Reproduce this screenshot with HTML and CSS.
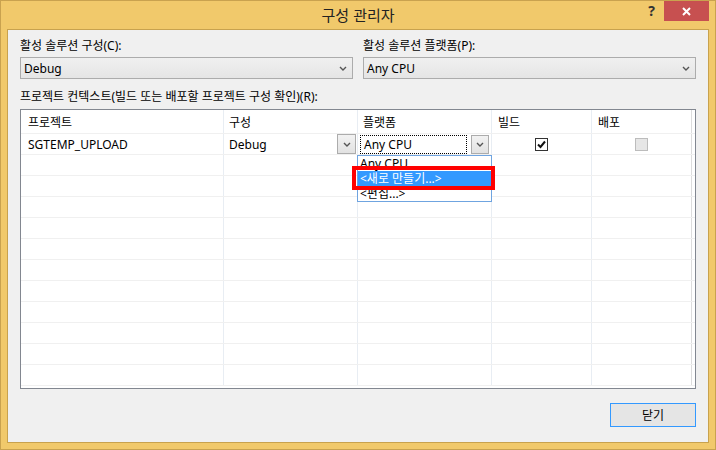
FILE: index.html
```html
<!DOCTYPE html>
<html lang="ko">
<head>
    <meta charset="UTF-8">
    <title>구성 관리자</title>
    <link rel="stylesheet" href="styles.css">
</head>
<body>
    <div class="window">
        <div class="titlebar">
            <span class="title">구성 관리자</span>
            <div class="title-buttons">
                <span class="help">?</span>
                <span class="close">
                    <svg width="9" height="9" viewBox="0 0 9 9"><path d="M1 1 L8 8 M8 1 L1 8" stroke="#fff" stroke-width="2" fill="none"/></svg>
                </span>
            </div>
        </div>
        <div class="client">
            <div class="top-row">
                <div class="field">
                    <div class="field-label">활성 솔루션 구성(C):</div>
                    <div class="combo">
                        <span>Debug</span>
                        <svg class="chev" width="8" height="5" viewBox="0 0 8 5"><path d="M1 1 L4 4 L7 1" stroke="#555" stroke-width="1.4" fill="none"/></svg>
                    </div>
                </div>
                <div class="field">
                    <div class="field-label">활성 솔루션 플랫폼(P):</div>
                    <div class="combo">
                        <span>Any CPU</span>
                        <svg class="chev" width="8" height="5" viewBox="0 0 8 5"><path d="M1 1 L4 4 L7 1" stroke="#555" stroke-width="1.4" fill="none"/></svg>
                    </div>
                </div>
            </div>
            <div class="grid-label">프로젝트 컨텍스트(빌드 또는 배포할 프로젝트 구성 확인)(R):</div>
            <div class="grid">
                <div class="row head">
                    <div class="cell c1">프로젝트</div>
                    <div class="cell c2">구성</div>
                    <div class="cell c3">플랫폼</div>
                    <div class="cell c4">빌드</div>
                    <div class="cell c5">배포</div>
                </div>
                <div class="row">
                    <div class="cell c1">SGTEMP_UPLOAD</div>
                    <div class="cell c2">
                        <span class="cell-text">Debug</span>
                        <span class="drop-btn"><svg width="8" height="5" viewBox="0 0 8 5"><path d="M1 1 L4 4 L7 1" stroke="#555" stroke-width="1.4" fill="none"/></svg></span>
                    </div>
                    <div class="cell c3 editing">
                        <span class="focus-box">Any CPU</span>
                        <span class="drop-btn"><svg width="8" height="5" viewBox="0 0 8 5"><path d="M1 1 L4 4 L7 1" stroke="#555" stroke-width="1.4" fill="none"/></svg></span>
                    </div>
                    <div class="cell c4 center">
                        <span class="check">
                            <svg width="11" height="11" viewBox="0 0 11 11"><path d="M2 5.5 L4.5 8 L9 2.5" stroke="#111" stroke-width="2" fill="none"/></svg>
                        </span>
                    </div>
                    <div class="cell c5 center">
                        <span class="check disabled"></span>
                    </div>
                </div>
                <div class="row"><div class="cell c1"></div><div class="cell c2"></div><div class="cell c3"></div><div class="cell c4"></div><div class="cell c5"></div></div>
                <div class="row"><div class="cell c1"></div><div class="cell c2"></div><div class="cell c3"></div><div class="cell c4"></div><div class="cell c5"></div></div>
                <div class="row"><div class="cell c1"></div><div class="cell c2"></div><div class="cell c3"></div><div class="cell c4"></div><div class="cell c5"></div></div>
                <div class="row"><div class="cell c1"></div><div class="cell c2"></div><div class="cell c3"></div><div class="cell c4"></div><div class="cell c5"></div></div>
                <div class="row"><div class="cell c1"></div><div class="cell c2"></div><div class="cell c3"></div><div class="cell c4"></div><div class="cell c5"></div></div>
                <div class="row"><div class="cell c1"></div><div class="cell c2"></div><div class="cell c3"></div><div class="cell c4"></div><div class="cell c5"></div></div>
                <div class="row"><div class="cell c1"></div><div class="cell c2"></div><div class="cell c3"></div><div class="cell c4"></div><div class="cell c5"></div></div>
                <div class="row"><div class="cell c1"></div><div class="cell c2"></div><div class="cell c3"></div><div class="cell c4"></div><div class="cell c5"></div></div>
                <div class="row"><div class="cell c1"></div><div class="cell c2"></div><div class="cell c3"></div><div class="cell c4"></div><div class="cell c5"></div></div>
                <div class="row"><div class="cell c1"></div><div class="cell c2"></div><div class="cell c3"></div><div class="cell c4"></div><div class="cell c5"></div></div>
                <div class="row"><div class="cell c1"></div><div class="cell c2"></div><div class="cell c3"></div><div class="cell c4"></div><div class="cell c5"></div></div>

                <div class="drop-list">
                    <div class="drop-item">Any CPU</div>
                    <div class="drop-item selected">&lt;새로 만들기...&gt;</div>
                    <div class="drop-item">&lt;편집...&gt;</div>
                </div>
                <div class="highlight"></div>
            </div>
            <div class="footer">
                <button type="button" class="close-btn">닫기</button>
            </div>
        </div>
    </div>
</body>
</html>
```

FILE: styles.css
```css
* {
    box-sizing: border-box;
}
body {
    margin: 0;
    font-family: "Segoe UI", "Noto Sans", "Noto Sans CJK KR", sans-serif;
    font-size: 12px;
    color: #000;
}
.window {
    width: 716px;
    height: 450px;
    background: #f1c96b;
    border: 1px solid #c9a24f;
    display: flex;
    flex-direction: column;
}
.titlebar {
    height: 28px;
    display: grid;
    grid-template-columns: 1fr auto 1fr;
    align-items: start;
}
.title {
    grid-column: 2;
    font-family: "Noto Sans CJK KR", sans-serif;
    font-size: 15px;
    line-height: 28px;
    color: #222;
}
.title-buttons {
    grid-column: 3;
    display: flex;
    justify-content: flex-end;
    align-items: flex-start;
}
.help {
    font-family: "Noto Sans", sans-serif;
    font-weight: bold;
    font-size: 14px;
    line-height: 18px;
    margin-top: 1px;
    margin-right: 9px;
    color: #333;
}
.close {
    width: 45px;
    height: 20px;
    background: #c75050;
    display: flex;
    align-items: center;
    justify-content: center;
    margin-right: 6px;
}
.client {
    margin: 0 6px;
    height: 414px;
    border: 1px solid #c8a24e;
    background: #f0f0f0;
    padding: 8px 12px 0;
}
.top-row {
    display: flex;
    gap: 10px;
}
.field {
    flex: 1;
}
.field-label {
    line-height: 16px;
    margin-bottom: 3px;
}
.combo {
    height: 22px;
    border: 1px solid #acacac;
    background: linear-gradient(#f0f0f0, #e5e5e5);
    display: flex;
    align-items: center;
    justify-content: space-between;
    padding: 0 5px 0 3px;
}
.grid-label {
    line-height: 16px;
    margin-top: 10px;
    margin-bottom: 4px;
}
.grid {
    position: relative;
    height: 280px;
    border: 1px solid #828790;
    background: #fff;
    overflow: hidden;
}
.row {
    display: flex;
    height: 21px;
    border-bottom: 1px solid #f0f0f0;
}
.row.head {
    height: 24px;
}
.cell {
    display: flex;
    align-items: center;
    border-right: 1px solid #e8edf3;
    padding-left: 6px;
}
.c1 { width: 203px; padding-left: 7px; }
.c2 { width: 134px; padding-left: 5px; }
.c3 { width: 134px; padding-left: 5px; }
.c4 { width: 100px; }
.c5 { width: 100px; border-right-color: #dcdcdc; }
.cell.center {
    justify-content: center;
    padding-left: 0;
}
.cell-text {
    flex: 1;
}
.drop-btn {
    width: 19px;
    height: 20px;
    border: 1px solid #acacac;
    background: linear-gradient(#f2f2f2, #e2e2e2);
    display: flex;
    align-items: center;
    justify-content: center;
    margin-right: 1px;
}
.cell.editing {
    padding: 1px 1px 0 2px;
    align-items: stretch;
}
.focus-box {
    flex: 1;
    border: 1px dotted #000;
    padding-left: 3px;
    display: flex;
    align-items: center;
    margin-right: 4px;
}
.editing .drop-btn {
    width: 18px;
    height: 19px;
}
.check {
    width: 13px;
    height: 13px;
    border: 1px solid #333;
    background: #fff;
    display: flex;
    align-items: center;
    justify-content: center;
    margin-left: -1px;
}
.check.disabled {
    border-color: #bcbcbc;
    background: #e6e6e6;
}
.drop-list {
    position: absolute;
    left: 336px;
    top: 45px;
    width: 135px;
    height: 47px;
    border: 1px solid #6fa4e0;
    background: #fff;
}
.drop-item {
    height: 15px;
    line-height: 15px;
    padding-left: 2px;
    overflow: hidden;
}
.drop-item.selected {
    background: #3399ff;
    color: #fff;
}
.highlight {
    position: absolute;
    left: 331px;
    top: 56px;
    width: 143px;
    height: 24px;
    border: 4px solid #ff0000;
}
.footer {
    display: flex;
    justify-content: flex-end;
    margin-top: 14px;
}
.close-btn {
    width: 86px;
    height: 24px;
    border: 1px solid #3399ff;
    background: #e5e5e5;
    font-family: inherit;
    font-size: 12px;
    color: #000;
    padding: 0;
}
```
